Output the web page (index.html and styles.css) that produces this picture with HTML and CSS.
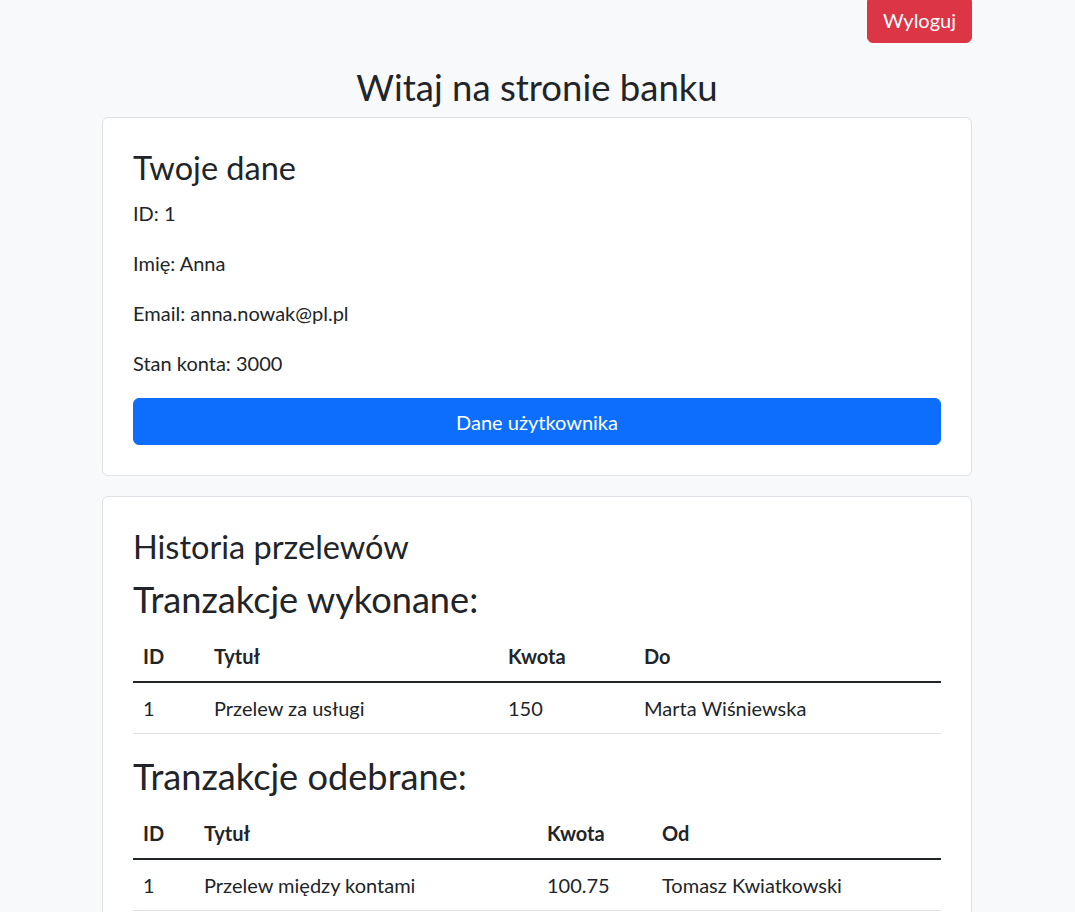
FILE: index.html
```html
<!DOCTYPE html>
<html lang="pl">
<head>
<meta charset="utf-8">
<title>Bank</title>
<link rel="stylesheet" href="styles.css">
</head>
<body class="page">
<div class="container">
  <div class="topbar">
    <button class="btn btn-danger">Wyloguj</button>
  </div>
  <h1 class="title">Witaj na stronie banku</h1>

  <div class="card">
    <div class="card-body">
      <h3 class="h3">Twoje dane</h3>
      <p class="info">ID: 1</p>
      <p class="info">Imię: Anna</p>
      <p class="info">Email: anna.nowak@pl.pl</p>
      <p class="info">Stan konta: 3000</p>
      <button class="btn btn-primary btn-block">Dane użytkownika</button>
    </div>
  </div>

  <div class="card">
    <div class="card-body">
      <h3 class="h3 history">Historia przelewów</h3>
      <h2 class="h2">Tranzakcje wykonane:</h2>
      <table class="table">
        <colgroup>
          <col class="c1-id"><col class="c1-title"><col class="c1-amount"><col class="c1-party">
        </colgroup>
        <thead>
          <tr><th>ID</th><th>Tytuł</th><th>Kwota</th><th>Do</th></tr>
        </thead>
        <tbody>
          <tr><td>1</td><td>Przelew za usługi</td><td>150</td><td>Marta Wiśniewska</td></tr>
        </tbody>
      </table>
      <h2 class="h2">Tranzakcje odebrane:</h2>
      <table class="table">
        <colgroup>
          <col class="c2-id"><col class="c2-title"><col class="c2-amount"><col class="c2-party">
        </colgroup>
        <thead>
          <tr><th>ID</th><th>Tytuł</th><th>Kwota</th><th>Od</th></tr>
        </thead>
        <tbody>
          <tr><td>1</td><td>Przelew między kontami</td><td>100.75</td><td>Tomasz Kwiatkowski</td></tr>
        </tbody>
      </table>
    </div>
  </div>
</div>
</body>
</html>
```

FILE: styles.css
```css
* { box-sizing: border-box; }

html, body { margin: 0; padding: 0; }

.page {
  background: #f8f9fa;
  color: #212529;
  font-family: "Lato", "Noto Sans", "Liberation Sans", sans-serif;
  font-size: 20px;
  line-height: 30px;
  padding-right: 1px;
}

.container {
  width: 870px;
  margin: 0 auto;
}

.topbar {
  display: flex;
  justify-content: flex-end;
  margin-top: -4px;
}

.btn {
  font-family: inherit;
  font-size: 20px;
  line-height: 30px;
  padding: 7.5px 15px;
  border: 1px solid transparent;
  border-radius: 6px;
  color: #fff;
  cursor: pointer;
}

.btn-danger { background: #dc3545; border-color: #dc3545; }
.btn-primary { background: #0d6efd; border-color: #0d6efd; }
.btn-block { display: block; width: 100%; }

.title {
  text-align: center;
  font-size: 36.5px;
  font-weight: 400;
  line-height: 43px;
  margin: 23px 0 8px;
}

.card {
  background: #fff;
  border: 1px solid #dee2e6;
  border-radius: 6px;
  margin-bottom: 20px;
}

.card-body { padding: 30px; }

.h3 {
  font-size: 32.5px;
  font-weight: 400;
  line-height: 40px;
  margin: 0 0 10px;
}

.h2 {
  font-size: 36.2px;
  font-weight: 400;
  line-height: 44px;
  margin: 0 0 10px;
}

.info { margin: 0 0 20px; }

.table {
  width: 100%;
  border-collapse: collapse;
  margin-bottom: 20px;
  table-layout: fixed;
}

.table th, .table td {
  text-align: left;
  padding: 10px;
  border-bottom: 1px solid #dee2e6;
  vertical-align: top;
}

.table th { font-weight: 700; border-bottom: 2.5px solid #212529; }

.c1-id { width: 71px; }
.c1-title { width: 294px; }
.c1-amount { width: 136px; }
.c1-party { width: 307px; }

.c2-id { width: 61px; }
.c2-title { width: 343px; }
.c2-amount { width: 115px; }
.c2-party { width: 289px; }
```
